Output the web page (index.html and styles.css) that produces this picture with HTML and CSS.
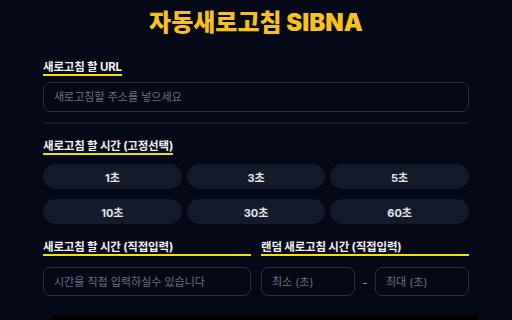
FILE: index.html
```html
<!DOCTYPE html>
<html lang="ko">
<head>
<meta charset="utf-8">
<link rel="stylesheet" href="styles.css">
</head>
<body>
<div class="app">
  <h1 class="title">자동새로고침 SIBNA</h1>

  <div class="field first">
    <span class="label">새로고침 할 URL</span>
    <input class="input" type="text" placeholder="새로고침할 주소를 넣으세요">
  </div>

  <hr class="divider">

  <div class="field second">
    <span class="label">새로고침 할 시간 (고정선택)</span>
    <div class="grid">
      <button class="btn">1초</button>
      <button class="btn">3초</button>
      <button class="btn">5초</button>
      <button class="btn">10초</button>
      <button class="btn">30초</button>
      <button class="btn">60초</button>
    </div>
  </div>

  <div class="cols">
    <div class="col">
      <span class="label full">새로고침 할 시간 (직접입력)</span>
      <input class="input" type="text" placeholder="시간을 직접 입력하실수 있습니다">
    </div>
    <div class="col">
      <span class="label full">랜덤 새로고침 시간 (직접입력)</span>
      <div class="range">
        <input class="input" type="text" placeholder="최소 (초)">
        <span class="dash">-</span>
        <input class="input" type="text" placeholder="최대 (초)">
      </div>
    </div>
  </div>

  <div class="log"></div>
</div>
</body>
</html>
```
FILE: styles.css
```css
html, body {
  margin: 0;
  padding: 0;
  background: #050816;
  height: 100%;
  overflow: hidden;
}
body {
  font-family: "Inter", "Noto Sans CJK KR", sans-serif;
  color: #e5e7eb;
}
.app {
  padding: 0 43px;
  display: flex;
  flex-direction: column;
}
.title {
  margin: 6px 0 0;
  font-family: "Inter", "Noto Sans CJK KR", sans-serif;
  font-size: 24px;
  font-weight: 900;
  line-height: 34px;
  color: #f8c21c;
  text-align: center;
}
.field {
  display: flex;
  flex-direction: column;
  align-items: flex-start;
}
.label {
  display: inline-block;
  font-size: 11.5px;
  font-weight: 700;
  line-height: 14px;
  color: #f1f2f4;
  border-bottom: 2px solid #f5e100;
  padding-bottom: 0;
  letter-spacing: -0.2px;
}
.field.first .label { margin-top: 20px; }
.field.second .label { margin-top: 15px; }
.input {
  box-sizing: border-box;
  width: 100%;
  height: 30px;
  margin-top: 6px;
  background: transparent;
  border: 1px solid #2b3142;
  border-radius: 7px;
  padding: 0 10px;
  font-family: "Inter", "Noto Sans CJK KR", sans-serif;
  font-size: 11px;
  color: #e5e7eb;
  outline: none;
}
.input::placeholder { color: #6b7280; }
.divider {
  width: 100%;
  margin: 10px 0 0;
  border: 0;
  height: 2px;
  background: #141827;
}
.grid {
  width: 100%;
  margin-top: 9px;
  display: grid;
  grid-template-columns: repeat(3, 1fr);
  column-gap: 5px;
  row-gap: 10px;
}
.btn {
  height: 25px;
  border: 0;
  border-radius: 13px;
  background: #131a29;
  color: #e5e7eb;
  font-family: "Inter", "Noto Sans CJK KR", sans-serif;
  font-size: 11px;
  font-weight: 700;
  padding: 0;
}
.cols {
  margin-top: 16px;
  display: grid;
  grid-template-columns: 1fr 1fr;
  column-gap: 10px;
}
.col {
  display: flex;
  flex-direction: column;
  align-items: stretch;
}
.col > .input, .range .input { margin-top: 11px; height: 29px; }
.label.full { display: block; }
.range {
  display: flex;
  align-items: center;
}
.range .input { flex: 1; min-width: 0; }
.dash {
  width: 20px;
  text-align: center;
  margin-top: 14px;
  font-size: 11px;
  color: #9ca3af;
}
.log {
  margin: 19px -9px 0 9px;
  height: 40px;
  background: #000000;
  border-radius: 4px;
}
```
